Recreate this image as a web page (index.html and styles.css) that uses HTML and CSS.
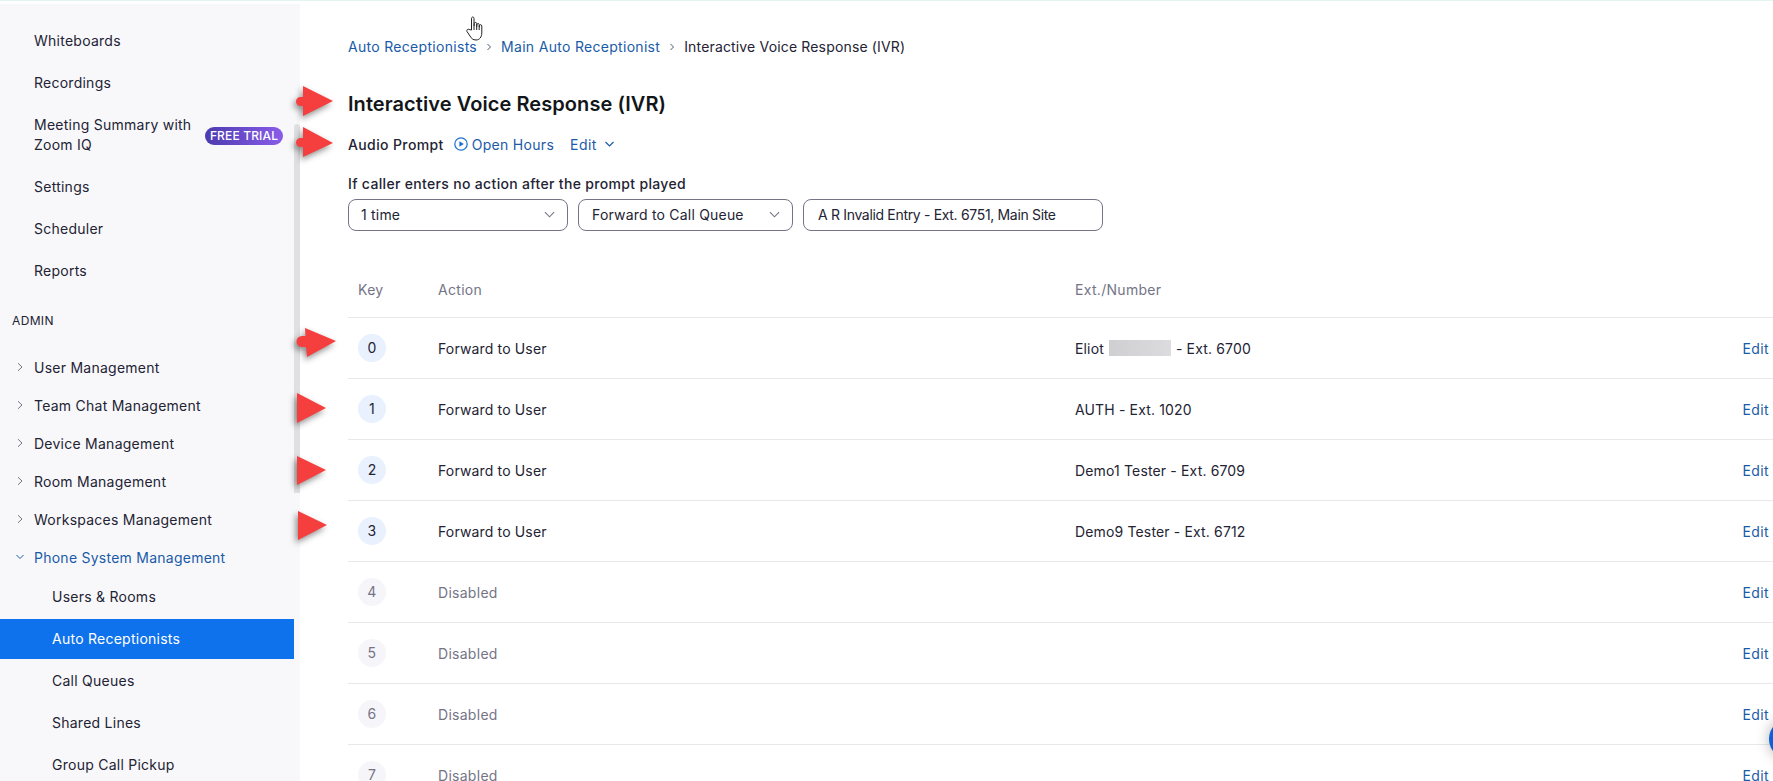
FILE: index.html
```html
<!DOCTYPE html>
<html lang="en">
<head>
<meta charset="utf-8">
<title>Interactive Voice Response (IVR)</title>
<link rel="stylesheet" href="styles.css">
</head>
<body>
<div class="page">
  <aside class="sidebar">
    <nav class="nav">
      <a class="nav-item">Whiteboards</a>
      <a class="nav-item">Recordings</a>
      <a class="nav-item nav-tall"><span class="nav-wrap">Meeting Summary with Zoom IQ</span><span class="trial">FREE TRIAL</span></a>
      <a class="nav-item">Settings</a>
      <a class="nav-item">Scheduler</a>
      <a class="nav-item">Reports</a>
    </nav>
    <div class="nav-title">ADMIN</div>
    <nav class="nav nav-admin">
      <a class="group"><svg class="chev" viewBox="0 0 8 8"><path d="M2 .2 6 4 2 7.8"/></svg>User Management</a>
      <a class="group"><svg class="chev" viewBox="0 0 8 8"><path d="M2 .2 6 4 2 7.8"/></svg>Team Chat Management</a>
      <a class="group"><svg class="chev" viewBox="0 0 8 8"><path d="M2 .2 6 4 2 7.8"/></svg>Device Management</a>
      <a class="group"><svg class="chev" viewBox="0 0 8 8"><path d="M2 .2 6 4 2 7.8"/></svg>Room Management</a>
      <a class="group"><svg class="chev" viewBox="0 0 8 8"><path d="M2 .2 6 4 2 7.8"/></svg>Workspaces Management</a>
      <a class="group group-open"><svg class="chev" viewBox="0 0 8 8"><path d="M.5 2 4 5.5 7.500 2"/></svg>Phone System Management</a>
    </nav>
    <nav class="nav nav-sub">
      <a class="sub">Users &amp; Rooms</a>
      <a class="sub sub-active">Auto Receptionists</a>
      <a class="sub">Call Queues</a>
      <a class="sub">Shared Lines</a>
      <a class="sub">Group Call Pickup</a>
    </nav>
    <div class="thumb"></div>
  </aside>

  <main class="main">
    <div class="crumbs">
      <a class="link">Auto Receptionists</a>
      <svg class="crumb-sep" viewBox="0 0 8 8"><path d="M2.5 1 5.5 4 2.5 7"/></svg>
      <a class="link">Main Auto Receptionist</a>
      <svg class="crumb-sep" viewBox="0 0 8 8"><path d="M2.5 1 5.5 4 2.5 7"/></svg>
      <span class="crumb-current">Interactive Voice Response (IVR)</span>
    </div>
    <h1 class="title">Interactive Voice Response (IVR)</h1>
    <div class="prompt">
      <strong class="prompt-label">Audio Prompt</strong>
      <svg class="play" viewBox="0 0 14 14"><circle cx="7" cy="7" r="6.2"/><path class="play-tri" d="M5.4 4.2 9.8 7 5.4 9.8Z"/></svg>
      <a class="link prompt-hours">Open Hours</a>
      <a class="link prompt-edit">Edit</a>
      <svg class="edit-chev" viewBox="0 0 10 6"><path d="M1 1 5 5 9 1"/></svg>
    </div>
    <div class="noaction">If caller enters no action after the prompt played</div>
    <div class="controls">
      <div class="field field-a">1 time<svg class="sel-chev" viewBox="0 0 12 7"><path d="M1 1 6 6 11 1"/></svg></div>
      <div class="field field-b">Forward to Call Queue<svg class="sel-chev" viewBox="0 0 12 7"><path d="M1 1 6 6 11 1"/></svg></div>
      <div class="field field-c">A R Invalid Entry - Ext. 6751, Main Site</div>
    </div>
    <div class="table">
      <div class="row row-head"><span class="cell-key">Key</span><span>Action</span><span>Ext./Number</span><span></span></div>
      <div class="row"><span class="badge">0</span><span>Forward to User</span><span class="target">Eliot <i class="redact"></i> - Ext. 6700</span><a class="link edit">Edit</a></div>
      <div class="row"><span class="badge">1</span><span>Forward to User</span><span class="target">AUTH - Ext. 1020</span><a class="link edit">Edit</a></div>
      <div class="row"><span class="badge">2</span><span>Forward to User</span><span class="target">Demo1 Tester - Ext. 6709</span><a class="link edit">Edit</a></div>
      <div class="row"><span class="badge">3</span><span>Forward to User</span><span class="target">Demo9 Tester - Ext. 6712</span><a class="link edit">Edit</a></div>
      <div class="row row-off"><span class="badge">4</span><span>Disabled</span><span></span><a class="link edit">Edit</a></div>
      <div class="row row-off"><span class="badge">5</span><span>Disabled</span><span></span><a class="link edit">Edit</a></div>
      <div class="row row-off"><span class="badge">6</span><span>Disabled</span><span></span><a class="link edit">Edit</a></div>
      <div class="row row-off"><span class="badge">7</span><span>Disabled</span><span></span><a class="link edit">Edit</a></div>
    </div>
  </main>

  <svg class="arrow a1" viewBox="0 0 38 32"><path d="M7 0 37 15 7 30V20H4.500A4.500 4.500 0 0 1 4.500 11H7Z"/></svg>
  <svg class="arrow a2" viewBox="0 0 38 32"><path d="M7 0 37 16 7 30V20H4.500A4.500 4.500 0 0 1 4.500 11H7Z"/></svg>
  <svg class="arrow a3" viewBox="0 0 40 32"><path d="M8 0 39 13 10 29 9 19H5A5 5 0 0 1 5 8H8.500Z"/></svg>
  <svg class="arrow a4" viewBox="0 0 30 32"><path d="M0 0 29 15 0 30Z"/></svg>
  <svg class="arrow a5" viewBox="0 0 30 32"><path d="M0 0 29 14 0 29Z"/></svg>
  <svg class="arrow a6" viewBox="0 0 30 32"><path d="M0 0 29 14 0 29Z"/></svg>

  <svg class="hand" viewBox="0 0 18 25"><path d="M5.500 14V2.500C5.500.5 8 .5 8 2.500V10L8.300 7.500C8.500 6 10.500 6 10.700 7.500V10.500L11 8.500C11.200 7.200 13 7.200 13.200 8.500V11L13.500 9.500C13.800 8.300 15.800 8.500 15.800 10V17C15.800 21 13.500 24 10 24 7 24 5.500 22.500 4 20L1 15.500C.2 14 2 12.500 3.200 13.500Z"/><path d="M8 10V14M10.700 10V14M13.200 11V14"/></svg>

  <div class="help"></div>
</div>
</body>
</html>
```
FILE: styles.css
```css
* { box-sizing: border-box; }
html, body { margin: 0; height: 100%; }
body {
  font-family: Inter, "Noto Sans", sans-serif;
  font-size: 14px;
  color: #232333;
  background: #fff;
  overflow: hidden;
}
a { text-decoration: none; color: inherit; }

.page {
  position: relative;
  display: flex;
  width: 1773px;
  height: 781px;
  overflow: hidden;
  border-top: 1px solid #e4f4f1;
}

/* sidebar */
.sidebar {
  position: relative;
  flex: none;
  width: 300px;
  margin-top: 3px;
  padding: 17px 6px 0 0;
  background: #f8f8fb;
  overflow: hidden;
  letter-spacing: .25px;
}
.nav { display: flex; flex-direction: column; gap: 2px; }
.nav-item {
  display: flex;
  align-items: center;
  justify-content: space-between;
  height: 40px;
  padding: 0 12px 2px 34px;
}
.nav-tall { height: 60px; padding-bottom: 0; line-height: 20px; }
.nav-wrap { width: 166px; }
.trial {
  flex: none;
  width: 78px;
  height: 18px;
  margin: 2px -1px 0 0;
  border-radius: 9px;
  background: linear-gradient(90deg, #4c3bb0, #8a5ce8);
  color: #fff;
  font-size: 12px;
  font-weight: 500;
  line-height: 18px;
  text-align: center;
  letter-spacing: .15px;
}
.nav-title {
  height: 59px;
  padding: 23px 0 0 12px;
  font-size: 12px;
  line-height: 14px;
  letter-spacing: .35px;
}
.group {
  display: flex;
  align-items: center;
  height: 36px;
  padding: 0 0 2px 16px;
}
.group-open { color: #1a5ba8; }
.chev {
  flex: none;
  width: 8px;
  height: 8px;
  margin-right: 10px;
  fill: none;
  stroke: #747487;
  stroke-width: 1;
}
.group-open .chev { stroke: #1a5ba8; }
.nav-sub { margin-top: 1px; }
.sub {
  display: flex;
  align-items: center;
  height: 40px;
  padding: 0 0 2px 52px;
}
.sub-active { background: #0e72ed; color: #fff; }
.thumb {
  position: absolute;
  top: 120px;
  right: 0;
  width: 6px;
  height: 369px;
  border-radius: 3px 3px 0 0;
  background: #e0e0e2;
}

/* main */
.main {
  flex: 1;
  min-width: 0;
  padding: 36px 0 0 48px;
}
.crumbs {
  display: flex;
  align-items: center;
  height: 20px;
  line-height: 20px;
  letter-spacing: .3px;
}
.crumb-current { letter-spacing: .16px; }
.crumb-sep {
  width: 8px;
  height: 8px;
  margin: 0 8px;
  fill: none;
  stroke: #4a5a75;
  stroke-width: 1;
}
.link { color: #1a5ba8; }
.title {
  margin: 33px 0 0;
  height: 28px;
  font-size: 20px;
  line-height: 28px;
  font-weight: 600;
  letter-spacing: .07px;
  color: #131619;
}
.prompt {
  display: flex;
  align-items: center;
  height: 20px;
  margin-top: 16px;
  letter-spacing: .3px;
}
.prompt-label { font-weight: 500; letter-spacing: .38px; }
.play {
  width: 14px;
  height: 14px;
  margin: 0 4px 0 10px;
  fill: none;
  stroke: #1a6fd0;
  stroke-width: 1.200;
}
.play-tri { fill: #1a6fd0; stroke: none; }
.prompt-edit { margin-left: 16px; letter-spacing: .4px; }
.edit-chev {
  width: 11px;
  height: 6px;
  margin-left: 7px;
  fill: none;
  stroke: #1a5ba8;
  stroke-width: 1.200;
}
.noaction {
  height: 20px;
  margin-top: 20px;
  line-height: 20px;
  font-weight: 500;
  letter-spacing: .33px;
}
.controls {
  display: flex;
  gap: 10px;
  margin-top: 5px;
}
.field {
  display: flex;
  align-items: center;
  justify-content: space-between;
  height: 32px;
  padding: 0 12px 1px 13px;
  border: 1px solid #747487;
  border-radius: 8px;
  letter-spacing: .2px;
}
.field-a { width: 220px; padding-left: 12px; }
.field-b { width: 215px; }
.field-c { width: 300px; padding-left: 14px; letter-spacing: -.33px; }
.sel-chev {
  width: 11px;
  height: 7px;
  fill: none;
  stroke: #747487;
  stroke-width: 1.200;
}
.table { margin-top: 31px; letter-spacing: .15px; }
.row {
  display: grid;
  grid-template-columns: 90px 637px 1fr auto;
  align-items: center;
  height: 61px;
  border-bottom: 1px solid #e8e8ea;
}
.row-head {
  height: 56px;
  color: #747487;
  letter-spacing: .3px;
}
.cell-key { padding-left: 10px; }
.badge {
  width: 28px;
  height: 28px;
  margin-left: 10px;
  border-radius: 50%;
  background: #e8f1fd;
  text-align: center;
  line-height: 28px;
}
.row-off { color: #747487; letter-spacing: .28px; }
.row-off .badge { background: #f6f6fa; }
.edit { padding-right: 4px; letter-spacing: .4px; }
.target { display: flex; align-items: center; gap: 5px; }
.redact {
  width: 62px;
  height: 16px;
  background: linear-gradient(90deg, #cfcfd1, #dcdcde);
}

/* overlays */
.arrow {
  position: absolute;
  fill: #f53f3f;
  filter: drop-shadow(-2px 3px 3px rgba(0, 0, 0, .45));
  overflow: visible;
}
.a1 { left: 296px; top: 85px; width: 38px; height: 32px; }
.a2 { left: 296px; top: 126px; width: 38px; height: 32px; }
.a3 { left: 297px; top: 327px; width: 40px; height: 32px; }
.a4 { left: 297px; top: 392px; width: 30px; height: 32px; }
.a5 { left: 297px; top: 455px; width: 30px; height: 32px; }
.a6 { left: 298px; top: 510px; width: 30px; height: 32px; }
.hand {
  position: absolute;
  left: 466px;
  top: 15px;
  width: 18px;
  height: 25px;
  fill: #fff;
  stroke: #222;
  stroke-width: 1;
}
.help {
  position: absolute;
  left: 1769px;
  top: 718px;
  width: 40px;
  height: 40px;
  border-radius: 50%;
  background: #0e5fd8;
  box-shadow: 0 0 14px rgba(0, 0, 0, .3);
}
```
